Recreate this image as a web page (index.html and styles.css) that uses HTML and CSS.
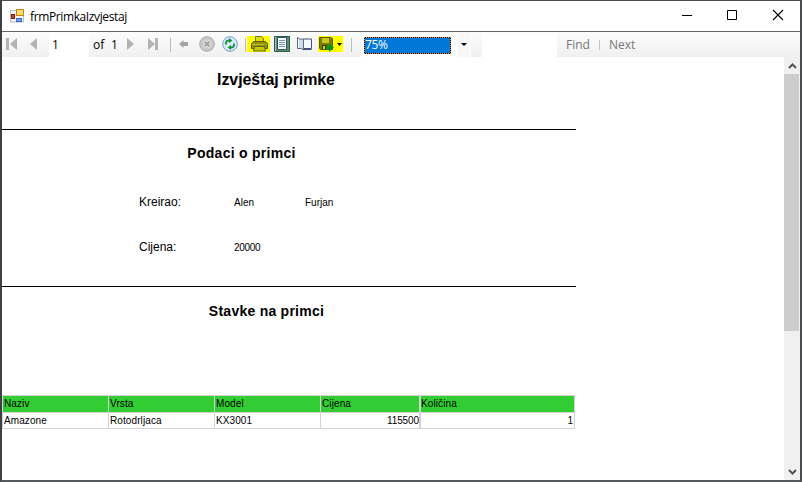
FILE: index.html
```
<!DOCTYPE html>
<html lang="hr">
<head>
<meta charset="utf-8">
<title>frmPrimkaIzvjestaj</title>
<link rel="stylesheet" href="styles.css">
</head>
<body>
<div class="window">
  <header class="titlebar">
    <svg class="app-icon" width="14" height="14" viewBox="0 0 14 14">
      <path d="M.5 1.500h13v11.500h-13z" fill="#f5f5f5" stroke="#bbb"/>
      <rect x="6.500" y=".5" width="7" height="6" fill="#ffd45a" stroke="#c28a18"/>
      <rect x="8" y="2" width="3" height="2" fill="#ffe998"/>
      <rect x="1.500" y="5.500" width="3" height="4" fill="#d33b30" stroke="#8e1d18"/>
      <rect x="6.500" y="9.500" width="5" height="3" fill="#6da4f5" stroke="#356bc4"/>
    </svg>
    <span class="title">frmPrimkaIzvjestaj</span>
    <svg class="controls" width="102" height="12" viewBox="0 0 102 12" fill="none" stroke="#000">
      <path d="M0 6.500h10M45.500 1.500h9v9h-9z"/>
      <path d="M91 1l10 10M101 1l-10 10" stroke-width="1.100"/>
    </svg>
  </header>
  <nav class="toolbar">
    <svg class="first" width="12" height="12" viewBox="0 0 12 12"><path d="M0 0h3v12h-3zM11 0v12L4 6z" fill="#b3b3b3"/></svg>
    <svg class="prev" width="8" height="12" viewBox="0 0 8 12"><path d="M7 0v12L0 6z" fill="#b3b3b3"/></svg>
    <span class="page-field">1</span>
    <span class="of">of</span><span class="total">1</span>
    <svg class="next" width="8" height="12" viewBox="0 0 8 12"><path d="M0 0v12L7 6z" fill="#b3b3b3"/></svg>
    <svg class="last" width="12" height="12" viewBox="0 0 12 12"><path d="M7 0h3v12h-3zM0 0v12L7 6z" fill="#b3b3b3"/></svg>
    <i class="sep sep-a"></i>
    <svg class="back" width="9" height="8" viewBox="0 0 9 8"><path d="M0 4l4.500-4v2H9v4H4.500v2z" fill="#a5a5a5"/></svg>
    <svg class="stop" width="16" height="16" viewBox="0 0 16 16"><circle cx="8" cy="8" r="7.300" fill="#c9c9c9" stroke="#aaa"/><path d="M5 5l6 6M11 5l-6 6" stroke="#ececec" stroke-width="3.400"/><path d="M5.500 5.500l5 5M10.500 5.500l-5 5" stroke="#a0a0a0" stroke-width="1.800"/></svg>
    <svg class="refresh" width="16" height="16" viewBox="0 0 16 16"><circle cx="8" cy="8" r="7.300" fill="#d9ebfb" stroke="#6c9dce"/><path d="M4 8.500V6.500Q4.500 4.500 7 4.500M12 7.500v2q-.5 2-3 2" fill="none" stroke="#16913d" stroke-width="1.800"/><path d="M7 2l3.500 2.500L7 7zM9 9l-3.500 2.500L9 14z" fill="#16913d"/></svg>
    <i class="sep sep-b"></i>
    <span class="mark print">
      <svg width="17" height="16" viewBox="0 0 17 16"><path d="M4.500 7V.5h6l2 2V7z" fill="#dddd0a" stroke="#76760c"/><path d="M.5 7.500l2-2h12l2 2v5h-16z" fill="#929204" stroke="#5d5d08"/><path d="M1 8.500h15" stroke="#c3c31b"/><path d="M3.500 10.500h10l1 4.500h-12z" fill="#c8c804" stroke="#666609"/><path d="M13 9h2" stroke="#2a9b13"/></svg>
    </span>
    <svg class="layout" width="16" height="16" viewBox="0 0 16 16"><path d="M.5.500h15v15H.5z" fill="#5a9168" stroke="#2e5a43"/><path d="M1.500 1v14" stroke="#9bc8a8"/><path d="M3.500 1.500h9v12h-9z" fill="#f7fbff" stroke="#3b4f72"/><path d="M5 4.500h6M5 6.500h6M5 8.500h6M5 10.500h6" stroke="#7894bc"/></svg>
    <svg class="setup" width="15" height="14" viewBox="0 0 15 14"><path d="M6.500 2h8v9.500h-8z" fill="#f4f8ff" stroke="#46536c"/><path d="M5 12.500h9.500" stroke="#46536c"/><path d="M.5.500l2 1.500h4v11l-2-1.500h-4z" fill="#cfdcf0" stroke="#5c687f"/><path d="M1.500 2v9" stroke="#fff"/></svg>
    <span class="mark export">
      <svg width="25" height="16" viewBox="0 0 25 16"><path d="M1.500 1.500h11l2 1v11h-12l-1-1z" fill="#7b7b08" stroke="#5a5a08"/><path d="M4 2h7v5H4z" fill="#c9c915"/><path d="M4 9h6v4H4z" fill="#333a08"/><path d="M5 10h2v3H5z" fill="#d6d60b"/><path d="M8 9.500h3V7l5 4.500-5 4.500v-3H8z" fill="#129412"/><path d="M19 7h5l-2.500 3z" fill="#111100"/></svg>
    </span>
    <i class="sep sep-c"></i>
    <div class="zoom"><span class="zoom-value">75%</span><span class="drop"><svg width="6" height="3" viewBox="0 0 6 3"><path d="M0 0h6L3 3z"/></svg></span></div>
    <span class="search"></span>
    <span class="find">Find</span><i class="bar"></i><span class="find-next">Next</span>
  </nav>
  <main class="viewer">
    <article class="report">
      <h1>Izvještaj primke</h1>
      <section class="details">
        <h2>Podaci o primci</h2>
        <div class="field"><span class="label">Kreirao:</span><span class="value">Alen</span><span class="value">Furjan</span></div>
        <div class="field"><span class="label">Cijena:</span><span class="value number">20000</span></div>
      </section>
      <section class="items">
        <h2>Stavke na primci</h2>
        <div class="grid">
          <b>Naziv</b><b>Vrsta</b><b>Model</b><b>Cijena</b><b class="qty">Količina</b>
          <span>Amazone</span><span>Rotodrljaca</span><span>KX3001</span><span class="right">115500</span><span class="right qty">1</span>
        </div>
      </section>
    </article>
    <aside class="scrollbar">
      <svg width="9" height="6" viewBox="0 0 9 6"><path d="M1 5l3.500-3.500L8 5" fill="none" stroke="#555" stroke-width="2"/></svg>
      <i class="thumb"></i>
      <svg class="down" width="9" height="6" viewBox="0 0 9 6"><path d="M1 1l3.500 3.500L8 1" fill="none" stroke="#555" stroke-width="2"/></svg>
    </aside>
  </main>
</div>
</body>
</html>
```
FILE: styles.css
```
* { box-sizing: border-box; }
body { margin: 0; background: #2d3032; }
svg { display: block; flex: none; }
.window { width: 802px; height: 482px; border: solid; border-width: 1px 2px 2px; border-color: #4b4d4f #4a4c4e #55585a #3c4244; background: #fff; font: 12px "Open Sans", sans-serif; display: flex; flex-direction: column; overflow: hidden; }
.titlebar { height: 31px; border-bottom: 1px solid #646464; display: flex; align-items: center; flex: none; }
.app-icon { margin-left: 8px; }
.title { margin-left: 6px; width: 110px; letter-spacing: -.38px; white-space: nowrap; color: #000; }
.controls { margin-left: 542px; margin-top: -2px; }
.toolbar { height: 25px; flex: none; display: flex; align-items: center; background: linear-gradient(#fcfcfc, #f0f0f0); color: #000; white-space: nowrap; }
.toolbar > svg, .toolbar > .mark { margin-bottom: 1px; }
.first { margin-left: 4px; }
.prev { margin-left: 12px; }
.page-field { width: 40px; height: 24px; margin-left: 11px; padding-left: 3px; line-height: 23px; background: #fff; }
.of { width: 18px; margin-left: 4px; }
.total { width: 8px; }
.next { margin-left: 8px; }
.last { margin-left: 13px; }
.sep { width: 1px; height: 14px; background: #bdbdbd; flex: none; }
.sep-a { margin-left: 10px; }
.back { margin-left: 8px; }
.stop { margin-left: 11px; }
.refresh { margin-left: 7px; }
.sep-b { margin-left: 7px; }
.mark { height: 16px; background: #ff0; flex: none; }
.print { margin-left: 1px; width: 23px; padding-left: 4px; }
.layout { margin-left: 4px; }
.setup { margin-left: 7px; }
.export { margin-left: 6px; width: 25px; }
.sep-c { margin-left: 8px; }
.zoom { width: 110px; height: 24px; margin-left: 9px; padding: 4px 0 3px 3px; background: #fff; display: flex; }
.zoom-value { width: 87px; height: 17px; line-height: 14px; border: 1px dotted #ff8728; background: linear-gradient(#0078d7, #0078d7) padding-box, linear-gradient(#000, #000) border-box; color: #fff; letter-spacing: -.35px; }
.drop { width: 12px; height: 24px; margin: -4px 0 0 7px; background: #f8f8f8; display: flex; align-items: center; justify-content: center; }
.search { width: 75px; height: 24px; margin-left: 11px; background: #fff; }
.find { width: 24px; margin-left: 9px; color: #777; }
.bar { width: 1px; height: 10px; margin-left: 9px; background: #c5c5c5; }
.find-next { margin-left: 9px; color: #777; }
.viewer { flex: 1; display: flex; min-height: 0; background: #fff; }
.report { width: 574px; font-family: "Liberation Sans", Arial, sans-serif; color: #000; }
h1, h2 { margin: 0; text-align: center; font-weight: bold; white-space: nowrap; }
h1 { height: 72px; padding-top: 13px; padding-right: 26px; font-size: 16px; line-height: 20px; letter-spacing: -.08px; }
.details { border: solid #000; border-width: 1px 0; height: 158px; }
h2 { padding-right: 95px; padding-top: 14px; font-size: 14px; line-height: 18px; letter-spacing: .27px; height: 62px; }
.field { display: flex; height: 45px; margin-left: 137px; line-height: 20px; }
.label { width: 95px; font-size: 12px; }
.value { width: 71px; font-size: 10px; line-height: 22px; }
.number { letter-spacing: -.3px; line-height: 21px; }
.items h2 { height: 108px; padding-top: 15px; padding-right: 45px; letter-spacing: .25px; }
.grid { display: grid; grid-template-columns: 106px 106px 106px 99px 155px; grid-template-rows: 17px 16px; width: 573px; border-left: 1px solid #d3d3d3; border-top: 1px solid #d3d3d3; font-size: 10px; line-height: 16px; letter-spacing: .1px; }
.grid > * { border-right: 1px solid #d3d3d3; border-bottom: 1px solid #d3d3d3; padding: 0 1px; }
.grid > .qty { border-left: 1px solid #d3d3d3; padding-left: 0; }
.grid > span { line-height: 15px; }
.grid b { background: #32cd32; font-weight: normal; }
.grid > .right { text-align: right; padding-right: 0; letter-spacing: -.1px; }
.grid > .right.qty { padding-right: 1px; }
.scrollbar { width: 16px; margin-left: 208px; background: #f0f0f0; display: flex; flex-direction: column; align-items: center; padding-top: 6px; }
.thumb { width: 15px; height: 257px; background: #cdcdcd; margin-top: 5px; margin-right: 1px; }
.down { margin-top: auto; margin-bottom: 5px; }
```
